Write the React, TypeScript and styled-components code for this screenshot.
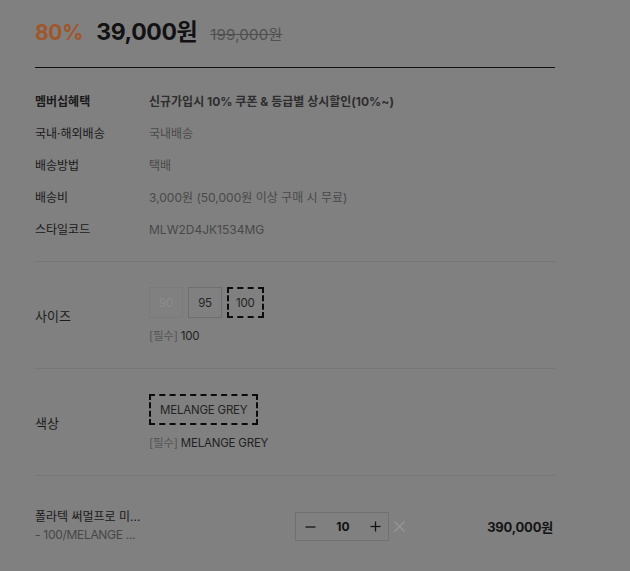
import React from 'react';
import styled, { createGlobalStyle } from 'styled-components';

// -- global --
const GlobalStyle = createGlobalStyle`
  html, body {
    margin: 0;
    padding: 0;
    background: #808080;
  }
  body {
    font-family: 'Inter', 'Noto Sans CJK KR', sans-serif;
    color: #141414;
  }
`;

// -- data --
const infos: { label: string; value: string; strong?: boolean }[] = [
  { label: '멤버십혜택', value: '신규가입시 10% 쿠폰 & 등급별 상시할인(10%~)', strong: true },
  { label: '국내·해외배송', value: '국내배송' },
  { label: '배송방법', value: '택배' },
  { label: '배송비', value: '3,000원 (50,000원 이상 구매 시 무료)' },
  { label: '스타일코드', value: 'MLW2D4JK1534MG' },
];

const sizes: { text: string; state: 'soldout' | 'normal' | 'selected' }[] = [
  { text: '90', state: 'soldout' },
  { text: '95', state: 'normal' },
  { text: '100', state: 'selected' },
];

// -- main component --
const App: React.FC = () => {
  return (
    <>
      <GlobalStyle />
      <Page>
        <PriceRow>
          <Rate>80%</Rate>
          <Price>39,000원</Price>
          <OriginPrice>199,000원</OriginPrice>
        </PriceRow>

        <InfoList>
          {infos.map((info) => (
            <InfoRow key={info.label}>
              <InfoLabel strong={info.strong}>{info.label}</InfoLabel>
              <InfoValue strong={info.strong}>{info.value}</InfoValue>
            </InfoRow>
          ))}
        </InfoList>

        <OptionSection>
          <OptionLabel>사이즈</OptionLabel>
          <OptionBody>
            <ChipRow>
              {sizes.map((s) => (
                <Chip key={s.text} state={s.state}>
                  {s.text}
                </Chip>
              ))}
            </ChipRow>
            <Picked>
              <span>[필수]</span> 100
            </Picked>
          </OptionBody>
        </OptionSection>

        <OptionSection>
          <OptionLabel>색상</OptionLabel>
          <OptionBody>
            <ChipRow>
              <Chip state="selected" wide>
                MELANGE GREY
              </Chip>
            </ChipRow>
            <Picked>
              <span>[필수]</span> MELANGE GREY
            </Picked>
          </OptionBody>
        </OptionSection>

        <ItemRow>
          <ItemName>
            <div>폴라텍 써멀프로 미...</div>
            <ItemOption>- 100/MELANGE ...</ItemOption>
          </ItemName>
          <QtyBox>
            <QtyButton>
              <svg width="11" height="11" viewBox="0 0 11 11">
                <line x1="0.5" y1="6" x2="10.5" y2="6" stroke="#151515" strokeWidth="1.3" />
              </svg>
            </QtyButton>
            <QtyValue>10</QtyValue>
            <QtyButton>
              <svg width="11" height="11" viewBox="0 0 11 11">
                <line x1="0.5" y1="5.5" x2="10.5" y2="5.5" stroke="#151515" strokeWidth="1.3" />
                <line x1="5.5" y1="0.5" x2="5.5" y2="10.5" stroke="#151515" strokeWidth="1.3" />
              </svg>
            </QtyButton>
          </QtyBox>
          <Remove>
            <svg width="11" height="11" viewBox="0 0 11 11">
              <line x1="0.5" y1="0.5" x2="10.5" y2="10.5" stroke="#999" strokeWidth="1.1" />
              <line x1="10.5" y1="0.5" x2="0.5" y2="10.5" stroke="#999" strokeWidth="1.1" />
            </svg>
          </Remove>
          <ItemPrice>390,000원</ItemPrice>
        </ItemRow>
      </Page>
    </>
  );
};

// -- styled components --

const Page = styled.div`
  width: 555px;
  padding: 13px 0 0 35px;
  min-height: 571px;
  box-sizing: border-box;
`;

const PriceRow = styled.div`
  display: flex;
  align-items: baseline;
  gap: 13px;
  height: 34px;
  padding-bottom: 20px;
  border-bottom: 1px solid #111;
`;

const Rate = styled.span`
  font-size: 21px;
  font-weight: 700;
  color: #a0562b;
  letter-spacing: -0.3px;
`;

const Price = styled.span`
  font-size: 23px;
  font-weight: 700;
  color: #121212;
  letter-spacing: -0.4px;
`;

const OriginPrice = styled.span`
  font-size: 15px;
  color: #4f4f4f;
  text-decoration: line-through;
  letter-spacing: 0.2px;
`;

const InfoList = styled.div`
  display: flex;
  flex-direction: column;
  gap: 14px;
  padding: 25px 0 22px;
  border-bottom: 1px solid #767676;
`;

const InfoRow = styled.div`
  display: grid;
  grid-template-columns: 114px 1fr;
  line-height: 18px;
  font-size: 12px;
`;

const InfoLabel = styled.div<{ strong?: boolean }>`
  color: #1a1a1a;
  font-weight: ${(p) => (p.strong ? 700 : 400)};
`;

const InfoValue = styled.div<{ strong?: boolean }>`
  color: ${(p) => (p.strong ? '#2e2e2e' : '#494949')};
  font-weight: ${(p) => (p.strong ? 700 : 400)};
`;

const OptionSection = styled.div`
  display: grid;
  grid-template-columns: 114px 1fr;
  align-items: center;
  height: 107px;
  border-bottom: 1px solid #767676;
  box-sizing: border-box;
`;

const OptionLabel = styled.div`
  font-size: 13px;
  font-weight: 400;
  color: #1c1c1c;
`;

const OptionBody = styled.div`
  display: flex;
  flex-direction: column;
  gap: 9px;
`;

const ChipRow = styled.div`
  display: flex;
  gap: 5px;
`;

const Chip = styled.div<{ state: 'soldout' | 'normal' | 'selected'; wide?: boolean }>`
  height: 31px;
  min-width: 34px;
  padding: 0 ${(p) => (p.wide ? '9px' : '7px')};
  box-sizing: border-box;
  display: flex;
  align-items: center;
  justify-content: center;
  font-size: 11.5px;
  border: ${(p) =>
    p.state === 'selected'
      ? '2px dashed #0c0c0c'
      : p.state === 'normal'
      ? '1px solid #6f6f6f'
      : '1px solid #7a7a7a'};
  color: ${(p) => (p.state === 'soldout' ? '#8c8c8c' : '#242424')};
  letter-spacing: -0.2px;
`;

const Picked = styled.div`
  font-size: 11.5px;
  color: #222;
  letter-spacing: -0.2px;

  span {
    color: #555;
  }
`;

const ItemRow = styled.div`
  display: flex;
  align-items: center;
  padding-top: 32px;
`;

const ItemName = styled.div`
  width: 260px;
  font-size: 12px;
  line-height: 18px;
  color: #1a1a1a;
`;

const ItemOption = styled.div`
  color: #474747;
  letter-spacing: -0.3px;
`;

const QtyBox = styled.div`
  width: 94px;
  height: 29px;
  box-sizing: border-box;
  border: 1px solid #717171;
  display: flex;
  align-items: center;
  justify-content: space-between;
  padding: 0 7px 0 9px;
`;

const QtyButton = styled.div`
  display: flex;
  align-items: center;
`;

const QtyValue = styled.div`
  font-size: 12px;
  font-weight: 700;
  color: #111;
`;

const Remove = styled.div`
  display: flex;
  margin-left: 5px;
`;

const ItemPrice = styled.div`
  margin-left: auto;
  margin-right: 2px;
  font-size: 13px;
  font-weight: 700;
  color: #141414;
  letter-spacing: -0.2px;
`;

export default App;
